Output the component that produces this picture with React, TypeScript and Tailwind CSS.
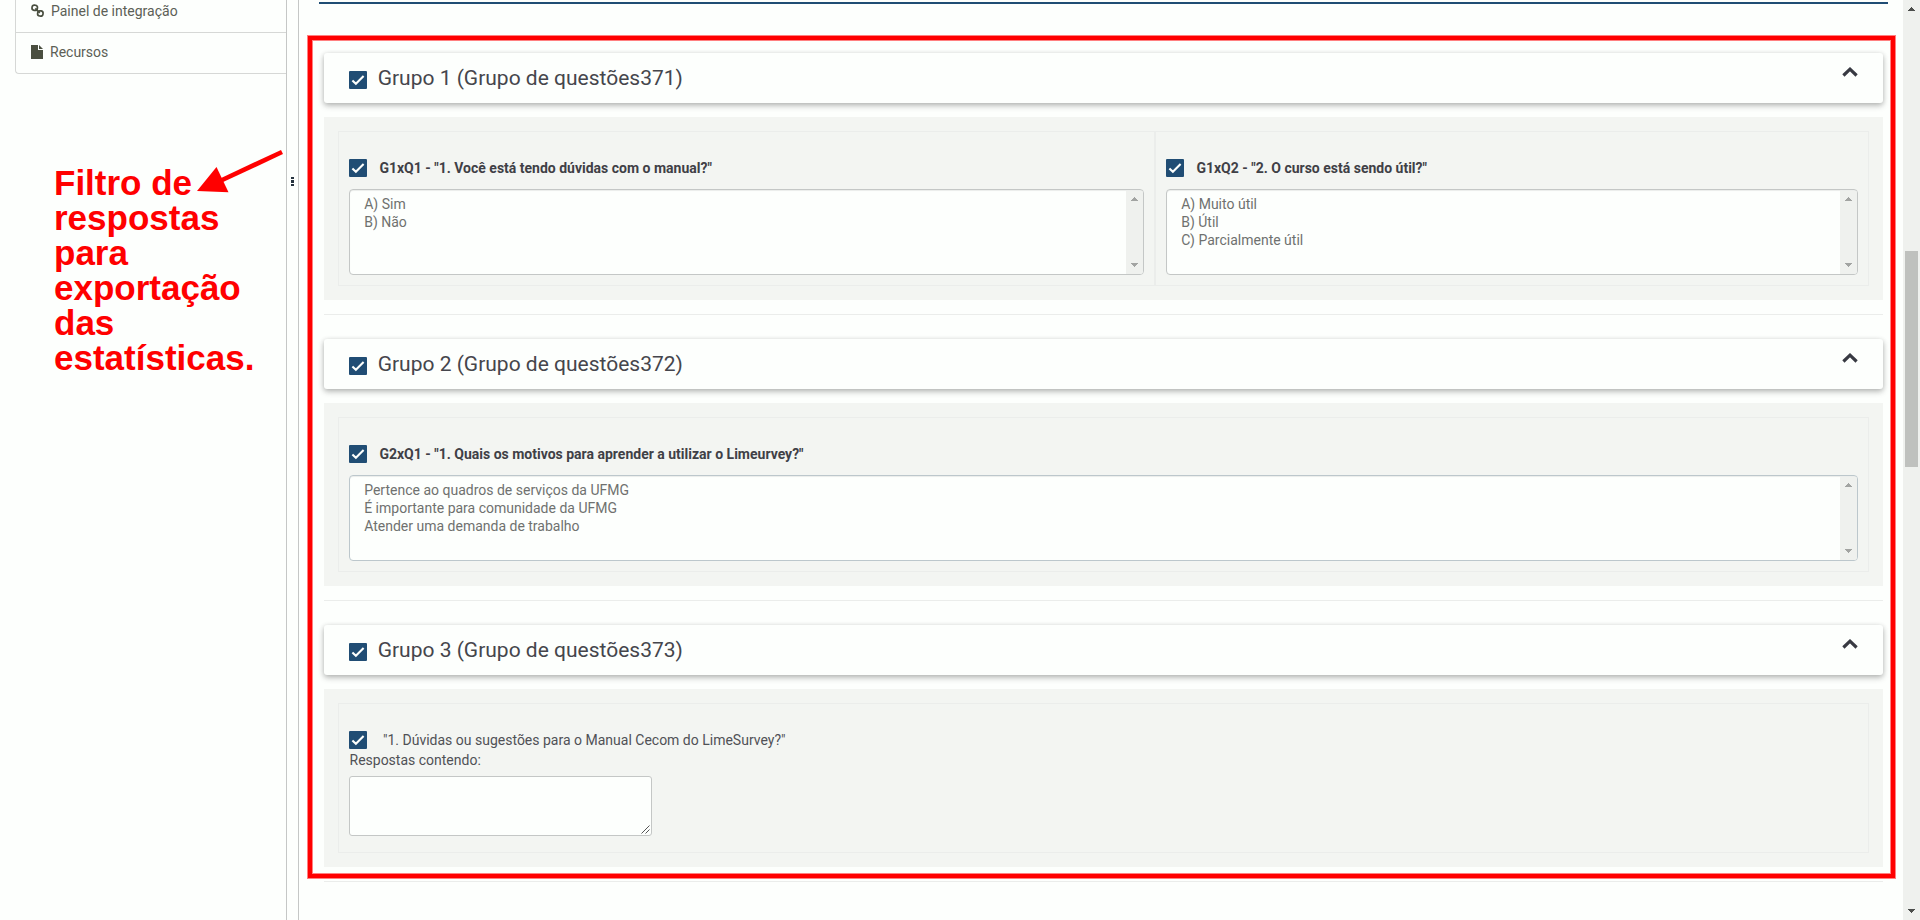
import React from "react";

const PAGE = "bg-[#fdfffd]";

function Check({ className = "" }: { className?: string }) {
  return (
    <svg viewBox="0 0 18 18" className={`block h-[18px] w-[18px] shrink-0 ${className}`}>
      <rect width="18" height="18" rx="1" fill="#204d74" />
      <path d="M3.4 9.4 L6.9 12.8 L14.6 5.1" fill="none" stroke="#fdfffd" strokeWidth="2.1" />
    </svg>
  );
}

function Chevron() {
  return (
    <svg viewBox="0 0 16 10" className="mt-[14px] block h-[10px] w-[16px]">
      <path d="M1.4 8.5 L8 2.2 L14.6 8.5" fill="none" stroke="#383a42" strokeWidth="3.2" />
    </svg>
  );
}

function Arrow({ down = false, fill }: { down?: boolean; fill: string }) {
  return (
    <svg viewBox="0 0 7 4" className="block h-[4px] w-[7px]" shapeRendering="crispEdges">
      <path d={down ? "M0 0h7v1h-1v1h-1v1h-1v1h-1v-1h-1v-1h-1v-1h-1z" : "M3 0h1v1h1v1h1v1h1v1h-7v-1h1v-1h1v-1h1z"} fill={fill} />
    </svg>
  );
}

function ListBox({ options, borderClass }: { options: string[]; borderClass: string }) {
  return (
    <div className={`flex h-[86px] justify-between overflow-hidden rounded-[4px] border ${borderClass} ${PAGE} shadow-[inset_0_1px_1px_rgba(0,0,0,0.075)]`}>
      <ul className="pt-[5px] pl-[14.2px] text-[14px] leading-[18px] text-[#6f716f]">
        {options.map((o) => (
          <li key={o}>{o}</li>
        ))}
      </ul>
      <div className="mt-px flex w-[17px] flex-col items-center justify-between bg-[#eff1ee] pt-[6px] pb-[7px]">
        <Arrow fill="#a2a4a2" />
        <Arrow down fill="#a2a4a2" />
      </div>
    </div>
  );
}

function Question({ title, options, borderClass = "border-[#c4c7c6]" }: { title: string; options: string[]; borderClass?: string }) {
  return (
    <>
      <div className="mb-[12px] flex h-[18px] items-center">
        <Check />
        <span className="ml-[12.4px] text-[14px] font-bold text-[#3f4046]">{title}</span>
      </div>
      <ListBox options={options} borderClass={borderClass} />
    </>
  );
}

function Group({ title, bodyClass, children }: { title: string; bodyClass: string; children: React.ReactNode }) {
  return (
    <section className="mb-[24px]">
      <header className={`flex h-[50px] justify-between rounded-[3px] pr-[25px] pl-[25px] ${PAGE} shadow-[0_3px_6px_rgba(0,0,0,0.2),0_1px_5px_rgba(0,0,0,0.16)]`}>
        <div className="flex">
          <Check className="mt-[18px]" />
          <h4 className="ml-[10.7px] text-[21px] leading-[50px] text-[#45464c]">{title}</h4>
        </div>
        <Chevron />
      </header>
      <div className={`mt-[14px] bg-[#f3f5f2] p-[14px] ${bodyClass}`}>
        <div className="flex h-full border border-[#ebedeb]">{children}</div>
      </div>
      <hr className="mt-[14px] border-t border-[#ebedeb]" />
    </section>
  );
}

export default function App() {
  return (
    <div className={`relative flex h-[920px] w-[1920px] overflow-hidden font-[Roboto,sans-serif] ${PAGE}`}>
      <aside className="flex w-[287px] flex-col border-r border-[#c5c7c6] pl-[15px]">
        <nav className="h-[74px] rounded-bl-[4px] border-b border-l border-[#d6d8d6] text-[14px] text-[#5c6056]">
          <div className="flex h-[33px] items-start border-b border-[#d6d8d6] pl-[15px]">
            <svg viewBox="0 0 13 13" className="mt-[4px] h-[13px] w-[13px]" fill="none" stroke="#4a4f40" strokeWidth="1.7">
              <rect x="1" y="1.2" width="5.4" height="5.2" rx="2.4" transform="rotate(8 3.7 4)" />
              <rect x="6.7" y="6.8" width="5.4" height="5.2" rx="2.4" transform="rotate(8 9 9)" />
              <path d="M4.3 4.3 L8.8 8.8" />
            </svg>
            <span className="ml-[7px] leading-[22px]">Painel de integração</span>
          </div>
          <div className="flex h-[38px] items-center pl-[15px]">
            <svg viewBox="0 0 12 14" className="h-[14px] w-[12px]" fill="#4a4f40">
              <path d="M0 0H7V5H12V14H0Z M8 0L12 4H8Z" />
            </svg>
            <span className="ml-[7px]">Recursos</span>
          </div>
        </nav>
        <p className="mt-[91px] ml-[39px] w-[210px] font-['Liberation_Sans',Arial,sans-serif] text-[35px] leading-[35px] font-bold whitespace-pre-line text-[#ff0000]">
          {"Filtro de\nrespostas\npara\nexportação\ndas\nestatísticas."}
        </p>
      </aside>

      <div className="flex w-[12px] items-start justify-center border-r border-[#c5c7c6]">
        <div className="mt-[177px] flex flex-col gap-[1px]">
          <i className="h-[2px] w-[3px] bg-[#26333f]" />
          <i className="h-[3px] w-[3px] bg-[#26333f]" />
          <i className="h-[2px] w-[3px] bg-[#26333f]" />
        </div>
      </div>

      <main className="flex-1 pt-[2px] pr-[15px] pl-[20px]">
        <div className="h-[2px] bg-[#204d74]" />
        <div className="mt-[49px] mr-[5px] ml-[5px]">
          <Group title="Grupo 1 (Grupo de questões371)" bodyClass="h-[183px]">
            <div className="w-[817px] border-r-2 border-[#ebedeb] pt-[27px] pr-[10px] pl-[10px]">
              <Question title={'G1xQ1 - "1. Você está tendo dúvidas com o manual?"'} options={["A) Sim", "B) Não"]} />
            </div>
            <div className="flex-1 pt-[27px] pr-[10px] pl-[10px]">
              <Question title={'G1xQ2 - "2. O curso está sendo útil?"'} options={["A) Muito útil", "B) Útil", "C) Parcialmente útil"]} />
            </div>
          </Group>
          <Group title="Grupo 2 (Grupo de questões372)" bodyClass="h-[183px]">
            <div className="flex-1 pt-[27px] pr-[10px] pl-[10px]">
              <Question
                title={'G2xQ1 - "1. Quais os motivos para aprender a utilizar o Limeurvey?"'}
                options={["Pertence ao quadros de serviços da UFMG", "É importante para comunidade da UFMG", "Atender uma demanda de trabalho"]}
                borderClass="border-[#bcc7cc]"
              />
            </div>
          </Group>
          <Group title="Grupo 3 (Grupo de questões373)" bodyClass="h-[178px]">
            <div className="flex-1 pt-[27px] pl-[10px] text-[14px] text-[#505156]">
              <div className="flex h-[18px] items-center">
                <Check />
                <span className="ml-[16px]">"1. Dúvidas ou sugestões para o Manual Cecom do LimeSurvey?"</span>
              </div>
              <div className="mt-[1px] h-[26px] pl-[0.5px] leading-[20px]">Respostas contendo:</div>
              <div className={`flex h-[60px] w-[303px] items-end justify-end rounded-[3px] border border-[#c4c7c6] ${PAGE}`}>
                <svg viewBox="0 0 9 9" className="mr-px mb-px h-[9px] w-[9px]" stroke="#555" strokeWidth="1">
                  <path d="M0.5 8.5 L8.5 0.5 M4.5 8.5 L8.5 4.5" />
                </svg>
              </div>
            </div>
          </Group>
        </div>
      </main>

      <div className="flex w-[17px] flex-col items-center bg-[#eff1ee] pt-[7px]">
        <Arrow fill="#4c4e4c" />
        <div className="mt-[240px] h-[216px] w-[13px] bg-[#bfc1be]" />
        <div className="mt-[442px]">
          <Arrow down fill="#4c4e4c" />
        </div>
      </div>

      <div className="pointer-events-none absolute top-[35px] left-[307px] h-[844px] w-[1589px] border border-[#ff8080]">
        <div className="h-full w-full border-4 border-[#ff0000]">
          <div className="h-full w-full border border-[#ff8080]" />
        </div>
      </div>
      <svg viewBox="0 0 90 46" className="absolute top-[148px] left-[195px] h-[46px] w-[90px]">
        <path d="M87 4 L25 33" stroke="#ff0000" strokeWidth="4.6" />
        <path d="M2 43 L21.5 19 L33.5 44.3 Z" fill="#ff0000" />
      </svg>
    </div>
  );
}
